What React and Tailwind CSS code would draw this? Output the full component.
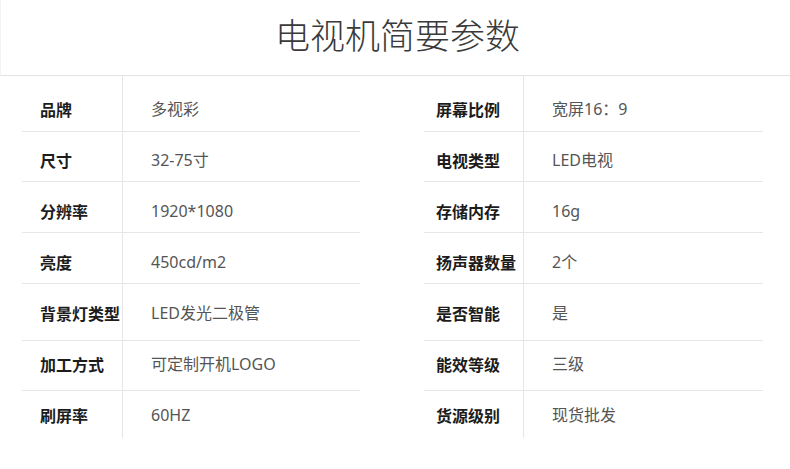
const font = { fontFamily: '"Noto Sans CJK SC", "Noto Sans", sans-serif' };
const valueFont = { fontFamily: '"Noto Sans", "Noto Sans CJK SC", sans-serif' };

const rows = [
  { h: 'h-[56px]', pt: 'pt-[23px]', l: ['品牌', '多视彩'], r: ['屏幕比例', '宽屏16：9'] },
  { h: 'h-[50px]', pt: 'pt-[18px]', l: ['尺寸', '32-75寸'], r: ['电视类型', 'LED电视'] },
  { h: 'h-[51px]', pt: 'pt-[19px]', l: ['分辨率', '1920*1080'], r: ['存储内存', '16g'] },
  { h: 'h-[51px]', pt: 'pt-[19px]', l: ['亮度', '450cd/m2'], r: ['扬声器数量', '2个'] },
  { h: 'h-[57px]', pt: 'pt-[19px]', l: ['背景灯类型', 'LED发光二极管'], r: ['是否智能', '是'] },
  { h: 'h-[50px]', pt: 'pt-[13px]', l: ['加工方式', '可定制开机LOGO'], r: ['能效等级', '三级'] },
  { h: 'h-[47px]', pt: 'pt-[14px]', l: ['刷屏率', '60HZ'], r: ['货源级别', '现货批发'] },
];

const SpecTable = ({ side, labelPad, labelW, width }) => (
  <div className={`flex flex-col ${width}`}>
    {rows.map((row, i) => {
      const [label, value] = row[side];
      const last = i === rows.length - 1;
      return (
        <div
          key={i}
          className={`flex ${row.h} ${last ? '' : 'border-b border-[#e6e6e6]'}`}
        >
          <div
            className={`${labelW} ${labelPad} ${row.pt} shrink-0 border-r border-[#e6e6e6] text-[16px] leading-[20px] font-bold text-[#1c1c1c]`}
          >
            {label}
          </div>
          <div
            className={`pl-[28px] ${row.pt} text-[16px] leading-[20px] text-[#555]`}
            style={valueFont}
          >
            {value}
          </div>
        </div>
      );
    })}
  </div>
);

export default function App() {
  return (
    <div className="w-[790px] h-[469px] bg-white overflow-hidden" style={font}>
      <div className="h-[76px] flex items-center justify-center pb-[8px] pl-[4px] border-b border-[#e3e3e3] border-l border-l-[#f3f3f3]">
        <h1 className="text-[35px] leading-none font-light text-[#3a3a3a]">
          电视机简要参数
        </h1>
      </div>
      <div className="flex pl-[22px]">
        <SpecTable side="l" labelPad="pl-[18px]" labelW="w-[101px]" width="w-[338px]" />
        <div className="w-[64px] shrink-0" />
        <SpecTable side="r" labelPad="pl-[12px]" labelW="w-[100px]" width="w-[339px]" />
      </div>
    </div>
  );
}
